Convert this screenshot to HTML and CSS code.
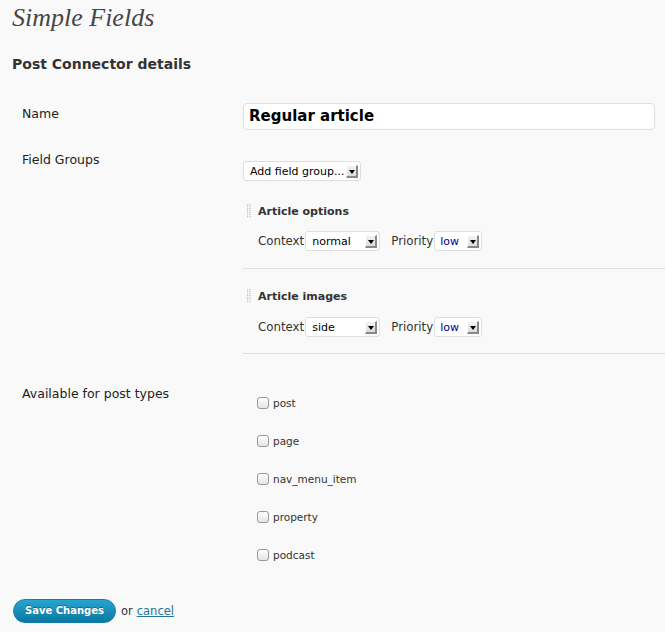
FILE: index.html
```html
<!DOCTYPE html>
<html>
<head>
<meta charset="utf-8">
<link rel="stylesheet" href="styles.css">
</head>
<body>
<div class="wrap">
  <h2 class="page-title">Simple Fields</h2>
  <h3 class="section-title">Post Connector details</h3>

  <div class="form">
    <div class="row row-name">
      <div class="label">Name</div>
      <div class="field"><div class="text-input">Regular article</div></div>
    </div>

    <div class="row row-groups">
      <div class="label">Field Groups</div>
      <div class="field">
        <div class="select select-add"><span class="val">Add field group...</span><span class="arrow"></span></div>

        <div class="group">
          <div class="group-head">
            <svg class="handle" width="4" height="14" viewBox="0 0 4 14"><g fill="#c4c4c4"><rect x="0" y="0" width="1.2" height="1.2"/><rect x="2.4" y="0" width="1.2" height="1.2"/><rect x="0" y="2" width="1.2" height="1.2"/><rect x="2.4" y="2" width="1.2" height="1.2"/><rect x="0" y="4" width="1.2" height="1.2"/><rect x="2.4" y="4" width="1.2" height="1.2"/><rect x="0" y="6" width="1.2" height="1.2"/><rect x="2.4" y="6" width="1.2" height="1.2"/><rect x="0" y="8" width="1.2" height="1.2"/><rect x="2.4" y="8" width="1.2" height="1.2"/><rect x="0" y="10" width="1.2" height="1.2"/><rect x="2.4" y="10" width="1.2" height="1.2"/><rect x="0" y="12" width="1.2" height="1.2"/><rect x="2.4" y="12" width="1.2" height="1.2"/></g></svg>
            <span class="group-name">Article options</span>
          </div>
          <div class="group-opts">
            <span class="opt-label">Context</span>
            <div class="select select-ctx"><span class="val">normal</span><span class="arrow"></span></div>
            <span class="opt-label prio">Priority</span>
            <div class="select select-prio"><span class="val blue">low</span><span class="arrow"></span></div>
          </div>
        </div>

        <div class="group">
          <div class="group-head">
            <svg class="handle" width="4" height="14" viewBox="0 0 4 14"><g fill="#c4c4c4"><rect x="0" y="0" width="1.2" height="1.2"/><rect x="2.4" y="0" width="1.2" height="1.2"/><rect x="0" y="2" width="1.2" height="1.2"/><rect x="2.4" y="2" width="1.2" height="1.2"/><rect x="0" y="4" width="1.2" height="1.2"/><rect x="2.4" y="4" width="1.2" height="1.2"/><rect x="0" y="6" width="1.2" height="1.2"/><rect x="2.4" y="6" width="1.2" height="1.2"/><rect x="0" y="8" width="1.2" height="1.2"/><rect x="2.4" y="8" width="1.2" height="1.2"/><rect x="0" y="10" width="1.2" height="1.2"/><rect x="2.4" y="10" width="1.2" height="1.2"/><rect x="0" y="12" width="1.2" height="1.2"/><rect x="2.4" y="12" width="1.2" height="1.2"/></g></svg>
            <span class="group-name">Article images</span>
          </div>
          <div class="group-opts">
            <span class="opt-label">Context</span>
            <div class="select select-ctx"><span class="val">side</span><span class="arrow"></span></div>
            <span class="opt-label prio">Priority</span>
            <div class="select select-prio"><span class="val blue">low</span><span class="arrow"></span></div>
          </div>
        </div>
      </div>
    </div>

    <div class="row row-types">
      <div class="label">Available for post types</div>
      <div class="field">
        <ul class="types">
          <li><span class="checkbox"></span>post</li>
          <li><span class="checkbox"></span>page</li>
          <li><span class="checkbox"></span>nav_menu_item</li>
          <li><span class="checkbox"></span>property</li>
          <li><span class="checkbox"></span>podcast</li>
        </ul>
      </div>
    </div>
  </div>

  <div class="actions">
    <span class="btn-primary">Save Changes</span>
    <span class="or">or</span>
    <a class="cancel" href="#">cancel</a>
  </div>
</div>
</body>
</html>
```

FILE: styles.css
```css
html, body {
  margin: 0;
  padding: 0;
  background: #f9f9f9;
}
body {
  font-family: "DejaVu Sans", "Liberation Sans", sans-serif;
  color: #333;
  font-size: 12px;
}
.wrap {
  padding: 0 12px;
  height: 632px;
  overflow: hidden;
}
.page-title {
  margin: 0;
  padding-top: 3px;
  font-family: "Liberation Serif", "DejaVu Serif", serif;
  font-style: italic;
  font-weight: normal;
  font-size: 26px;
  line-height: 30px;
  color: #464646;
}
.section-title {
  margin: 21px 0 0;
  font-size: 14px;
  font-weight: bold;
  line-height: 20px;
  color: #333;
}
.form {
  margin-top: 29px;
}
.row {
  display: grid;
  grid-template-columns: 231px 1fr;
}
.label {
  padding-left: 10px;
  font-size: 12.5px;
  line-height: 16px;
  color: #222;
}
.row-name .label { padding-top: 3px; }
.text-input {
  width: 412px;
  height: 27px;
  box-sizing: border-box;
  border: 1px solid #dfdfdf;
  border-radius: 4px;
  background: #fff;
  font-size: 15px;
  font-weight: bold;
  color: #000;
  line-height: 25px;
  padding-left: 5px;
}
.row-groups {
  margin-top: 21px;
}
.row-groups .label { padding-top: 1px; }
.select {
  display: inline-flex;
  align-items: center;
  box-sizing: border-box;
  height: 20px;
  border: 1px solid #dfdfdf;
  border-radius: 3px;
  background: #fff;
  padding-left: 6px;
  padding-right: 2px;
  font-size: 11px;
  color: #000;
  vertical-align: middle;
}
.select .val { flex: 1; white-space: nowrap; }
.select .val.blue { color: #00008b; }
.arrow {
  position: relative;
  width: 12px;
  height: 13px;
  box-sizing: border-box;
  background: linear-gradient(#f2f2f2, #dcdcdc);
  border-right: 2px solid #888;
  border-bottom: 2px solid #888;
  border-top: 1px solid #fff;
  border-left: 1px solid #fff;
  margin-left: 1px;
}
.arrow::after {
  content: "";
  position: absolute;
  left: 2px;
  top: 4px;
  border-left: 3px solid transparent;
  border-right: 3px solid transparent;
  border-top: 4px solid #000;
}
.select-add {
  margin-top: 10px;
  width: 118px;
  padding-left: 6px;
}
.group {
  border-bottom: 1px solid #dfdfdf;
  padding-bottom: 17px;
  margin-right: -12px;
}
.group + .group { padding-bottom: 16px; }
.group-head {
  display: flex;
  align-items: center;
  padding-left: 4px;
  height: 16px;
  margin-top: 22px;
}
.group + .group .group-head { margin-top: 19px; }
.group + .group .group-opts { margin-top: 13px; }
.handle {
  display: block;
  margin-right: 7px;
  flex: none;
}
.group-name {
  font-weight: bold;
  font-size: 11px;
  color: #333;
}
.group-opts {
  display: flex;
  align-items: center;
  padding-left: 15px;
  margin-top: 12px;
}
.opt-label {
  font-size: 11.8px;
  color: #333;
  margin-right: 1px;
}
.opt-label.prio { margin-left: 11px; margin-right: 1px; }
.select-ctx { width: 75px; }
.select-prio { width: 48px; padding-left: 5px; }

.row-types {
  margin-top: 32px;
}
.types {
  list-style: none;
  margin: 0;
  padding: 0 0 0 14px;
}
.types li {
  display: flex;
  align-items: center;
  height: 18px;
  margin: 0 0 20px;
  font-size: 10.5px;
  color: #333;
}
.types li:first-child { margin-top: 8px; }
.checkbox {
  width: 12px;
  height: 12px;
  box-sizing: border-box;
  border: 1px solid #999;
  border-radius: 3px;
  background: linear-gradient(#fff, #e4e4e4);
  margin-right: 4px;
  flex: none;
}
.actions {
  display: flex;
  align-items: center;
  margin-top: 15px;
  margin-left: 1px;
}
.btn-primary {
  display: inline-block;
  height: 24px;
  line-height: 22px;
  padding: 0 11px;
  border-radius: 12px;
  background: linear-gradient(#28a4d2, #0a78a1);
  border: 1px solid #1180a9;
  box-sizing: border-box;
  color: #fff;
  font-weight: bold;
  font-size: 10px;
  text-shadow: 0 -1px 0 rgba(0,0,0,0.3);
}
.or {
  margin-left: 5px;
  font-size: 11.5px;
  color: #333;
}
.cancel {
  margin-left: 4px;
  font-size: 11.5px;
  color: #21759b;
}
```
